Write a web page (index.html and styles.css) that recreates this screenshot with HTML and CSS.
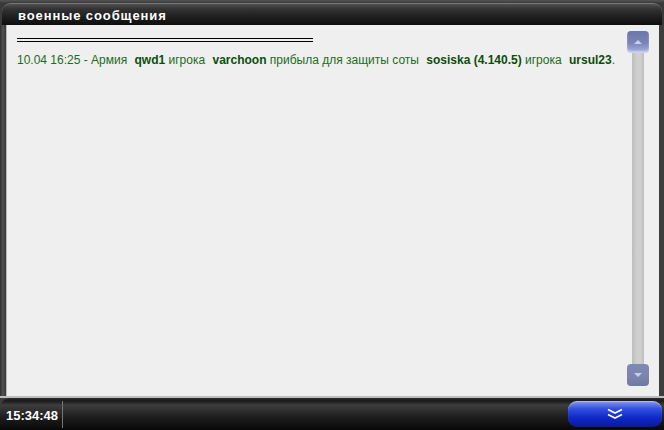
FILE: index.html
```html
<!DOCTYPE html>
<html lang="ru">
<head>
<meta charset="utf-8">
<title>военные сообщения</title>
<link rel="stylesheet" href="styles.css">
</head>
<body>
<div class="window">
  <div class="titlebar"><span class="title">военные сообщения</span></div>
  <div class="frame">
    <div class="panel">
      <div class="messages">
        <div class="rule"></div>
        <p class="msg">10.04 16:25 - Армия <b>qwd1</b> игрока <b>varchoon</b> прибыла для защиты соты <b>sosiska (4.140.5)</b> игрока <b>ursul23</b>.</p>
      </div>
      <div class="scrollbar">
        <div class="sbtn up"><svg width="10" height="6" viewBox="0 0 10 6"><path d="M1 5 L5 1 L9 5 Z" fill="#c8d0f0"/></svg></div>
        <div class="track"></div>
        <div class="sbtn down"><svg width="10" height="6" viewBox="0 0 10 6"><path d="M1 1 L5 5 L9 1 Z" fill="#c8d0f0"/></svg></div>
      </div>
    </div>
  </div>
  <div class="bottombar">
    <span class="clock">15:34:48</span>
    <span class="sep"></span>
    <span class="spacer"></span>
    <button class="more"><svg width="18" height="12" viewBox="0 0 18 12"><path d="M2 1.5 L9 5 L16 1.5" fill="none" stroke="#fff" stroke-width="1.6"/><path d="M2 6.5 L9 10 L16 6.5" fill="none" stroke="#fff" stroke-width="1.6"/></svg></button>
  </div>
</div>
</body>
</html>
```

FILE: styles.css
```css
* { box-sizing: border-box; }
html, body { margin: 0; padding: 0; }
body {
  width: 664px;
  height: 430px;
  overflow: hidden;
  background: #3b3b3b;
  font-family: "Liberation Sans", Arial, sans-serif;
}
.window {
  width: 664px;
  height: 430px;
  display: flex;
  flex-direction: column;
  background: linear-gradient(#555 0, #3a3a3a 3px, #3c3c3c 100%);
}
.titlebar {
  height: 22px;
  margin: 3px 2px 0 2px;
  border-radius: 9px 9px 0 0;
  background: linear-gradient(#505050 0, #333 5px, #1c1c1c 14px, #0c0c0c 22px);
  border-top: 1px solid #777;
  padding-left: 16px;
  display: flex;
  align-items: center;
}
.title {
  color: #fff;
  font-weight: bold;
  font-size: 13px;
  letter-spacing: 0.9px;
  padding-top: 1px;
}
.frame {
  flex: 1;
  display: flex;
  padding: 0 5px 0 6px;
  background: linear-gradient(90deg, #2e2e2e 0, #555 3px, #3d3d3d 5px, #3d3d3d 100%);
  border-bottom: 2px solid #bdbdbd;
}
.panel {
  flex: 1;
  background: #efefef;
  border-left: 1px solid #bcbcbc;
  display: grid;
  grid-template-columns: 1fr 23px;
  padding: 6px 10px 10px 10px;
}
.messages {
  padding-top: 7px;
}
.rule {
  width: 296px;
  height: 4px;
  border-top: 1px solid #000;
  border-bottom: 1px solid #000;
}
.msg {
  margin: 11px 0 0 0;
  font-size: 12px;
  line-height: 14px;
  color: #1d6b1d;
  white-space: nowrap;
}
.msg b {
  color: #0c4d0c;
  padding: 0 0 0 4px;
}
.scrollbar {
  display: flex;
  flex-direction: column;
  align-items: center;
}
.sbtn {
  width: 22px;
  height: 22px;
  border-radius: 4px;
  display: flex;
  align-items: center;
  justify-content: center;
}
.sbtn.up {
  background: linear-gradient(#6d76a8 0, #7a84b6 55%, #a9b4e4 100%);
  box-shadow: inset 0 -2px 2px rgba(230, 235, 255, 0.6);
}
.sbtn.down {
  background: linear-gradient(#8089b4 0, #7b84ae 60%, #6f789f 100%);
}
.track {
  flex: 1;
  width: 12px;
  background: linear-gradient(90deg, #bdbdbd 0, #cfcfcf 40%, #d0d0d0 70%, #bcbcbc 100%);
}
.bottombar {
  height: 32px;
  display: flex;
  align-items: stretch;
  background: linear-gradient(#2c2c2c 0, #1a1a1a 3px, #3d3d3d 7px, #1c1c1c 20px, #080808 32px);
  border-radius: 10px 0 0 0;
  margin-top: 0;
}
.clock {
  color: #fff;
  font-weight: bold;
  font-size: 13px;
  display: flex;
  align-items: center;
  padding: 2px 0 0 6px;
  width: 62px;
}
.sep {
  width: 1px;
  margin: 3px 0 2px 0;
  background: #777;
}
.spacer { flex: 1; }
.more {
  width: 94px;
  height: 26px;
  margin: 3px 2px 0 0;
  padding: 0;
  border: none;
  border-radius: 9px;
  background: linear-gradient(#8a98ea 0, #3050e0 30%, #0f27c8 65%, #0a1a9a 100%);
  box-shadow: inset 0 1px 1px rgba(255,255,255,0.4);
  display: flex;
  align-items: center;
  justify-content: center;
}
```
